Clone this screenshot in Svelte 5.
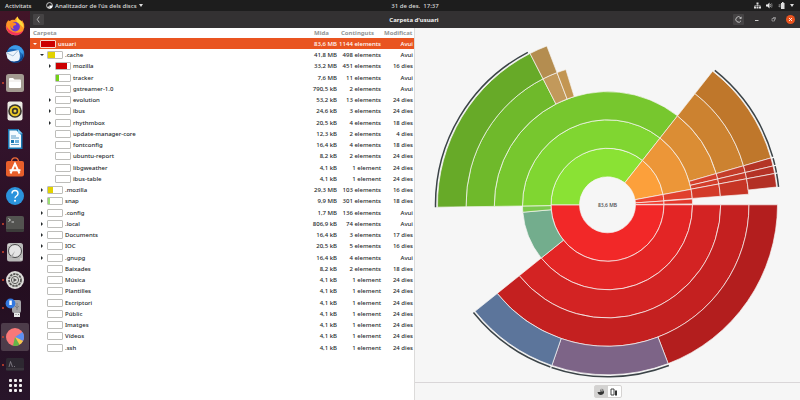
<script>
  // name, depth, size, contents, modified, expander, fill percent, fill colour
  const raw = [
    ['usuari', 0, '83,6 MB', '1144 elements', 'Avui', 'open', 100, '#cc0000'],
    ['.cache', 1, '41,8 MB', '498 elements', 'Avui', 'open', 50, '#e2d200'],
    ['mozilla', 2, '33,2 MB', '451 elements', '16 dies', 'closed', 78, '#cc0000'],
    ['tracker', 2, '7,6 MB', '11 elements', 'Avui', '', 18, '#73d216'],
    ['gstreamer-1.0', 2, '790,5 kB', '2 elements', 'Avui', '', 0, ''],
    ['evolution', 2, '53,2 kB', '13 elements', '24 dies', 'closed', 0, ''],
    ['ibus', 2, '24,6 kB', '3 elements', '24 dies', 'closed', 0, ''],
    ['rhythmbox', 2, '20,5 kB', '4 elements', '18 dies', 'closed', 0, ''],
    ['update-manager-core', 2, '12,3 kB', '2 elements', '4 dies', '', 0, ''],
    ['fontconfig', 2, '16,4 kB', '4 elements', '18 dies', '', 0, ''],
    ['ubuntu-report', 2, '8,2 kB', '2 elements', '24 dies', '', 0, ''],
    ['libgweather', 2, '4,1 kB', '1 element', '24 dies', '', 0, ''],
    ['ibus-table', 2, '4,1 kB', '1 element', '24 dies', '', 0, ''],
    ['.mozilla', 1, '29,3 MB', '103 elements', '16 dies', 'closed', 35, '#e2d200'],
    ['snap', 1, '9,9 MB', '301 elements', '18 dies', 'closed', 14, '#99e070'],
    ['.config', 1, '1,7 MB', '136 elements', 'Avui', 'closed', 0, ''],
    ['.local', 1, '806,9 kB', '74 elements', 'Avui', 'closed', 0, ''],
    ['Documents', 1, '16,4 kB', '3 elements', '17 dies', 'closed', 0, ''],
    ['IOC', 1, '20,5 kB', '5 elements', '16 dies', 'closed', 0, ''],
    ['.gnupg', 1, '16,4 kB', '4 elements', 'Avui', 'closed', 0, ''],
    ['Baixades', 1, '8,2 kB', '2 elements', '18 dies', '', 0, ''],
    ['Música', 1, '4,1 kB', '1 element', '24 dies', '', 0, ''],
    ['Plantilles', 1, '4,1 kB', '1 element', '24 dies', '', 0, ''],
    ['Escriptori', 1, '4,1 kB', '1 element', '24 dies', '', 0, ''],
    ['Públic', 1, '4,1 kB', '1 element', '24 dies', '', 0, ''],
    ['Imatges', 1, '4,1 kB', '1 element', '24 dies', '', 0, ''],
    ['Vídeos', 1, '4,1 kB', '1 element', '24 dies', '', 0, ''],
    ['.ssh', 1, '4,1 kB', '1 element', '24 dies', '', 0, '']
  ];
  const rows = raw.map(([name, depth, size, items, date, toggle, fill, color]) => ({ name, depth, size, items, date, toggle, fill, color }));

  const cx = 192.5;
  const cy = 176.8;
  const radii = [28, 56.5, 85, 113.2, 141.5, 170];

  // ring, start angle, end angle (degrees clockwise from east), colour
  const slices = [
    [1, 0, 180, '#f22828'], [2, 0, 141.2, '#e32525'], [3, 0, 141.2, '#d32323'], [4, 0, 141.2, '#c42020'], [5, 0, 69.1, '#b31e1e'],
    [5, 69.1, 109.1, '#7d6487'], [5, 109.1, 141.2, '#5c759b'],
    [2, 141.2, 175, '#73ad8d'], [2, 175, 179.2, '#7bc94c'],
    [1, 180, 308.2, '#8ae234'], [2, 179.2, 308.2, '#80d631'], [3, 179.2, 308.2, '#77c72e'], [4, 179.2, 242.9, '#6fb92b'], [5, 179.2, 242.9, '#67aa28'],
    [4, 242.9, 249.1, '#c2995b'], [4, 249.1, 252.9, '#c39652'], [5, 242.9, 249.1, '#b48d50'],
    [1, 308.2, 349.5, '#fca03b'], [2, 308.2, 349.5, '#ec9638'], [3, 308.2, 344, '#db8d34'], [4, 308.2, 344, '#cc8230'], [5, 308.2, 344, '#bf772b'],
    [1, 349.5, 356.1, '#ec4430'], [2, 349.5, 355.7, '#e0402d'],
    [3, 344, 346.8, '#d4402c'], [4, 344, 346.8, '#c43c2a'], [5, 344, 346.8, '#b43526'],
    [3, 346.8, 349.4, '#d23d2a'], [4, 346.8, 349.4, '#c43828'], [5, 346.8, 349.4, '#b43226'],
    [3, 349.4, 355.7, '#d33a29'], [4, 349.4, 355.7, '#c63526'], [5, 349.4, 354, '#b33025'],
    [1, 356.1, 359.4, '#f03a2c'], [2, 356.1, 359.4, '#e3372a']
  ];
  const edges = [[69.1, 109], [109.4, 141.2], [179.2, 242.4], [308.6, 343.8], [344.3, 346.6], [347, 349.2], [349.6, 354]];

  function at(r, deg) {
    const a = (deg * Math.PI) / 180;
    return (cx + r * Math.cos(a)).toFixed(2) + ' ' + (cy + r * Math.sin(a)).toFixed(2);
  }
  function slicePath([ring, a, b]) {
    const r0 = radii[ring - 1];
    const r1 = radii[ring];
    return `M${at(r0, a)}L${at(r1, a)}A${r1} ${r1} 0 0 1 ${at(r1, b)}L${at(r0, b)}A${r0} ${r0} 0 0 0 ${at(r0, a)}Z`;
  }
  const edgePath = ([a, b]) => `M${at(172, a)}A172 172 0 0 1 ${at(172, b)}`;

  const dock = [
    { id: 'firefox', label: 'Firefox' },
    { id: 'mail', label: 'Thunderbird' },
    { id: 'files', label: 'Fitxers', running: true },
    { id: 'music', label: 'Rhythmbox' },
    { id: 'writer', label: 'Writer' },
    { id: 'store', label: 'Programari' },
    { id: 'help', label: 'Ajuda' },
    { id: 'terminal', label: 'Terminal', running: true },
    { id: 'disks', label: 'Discs', running: true },
    { id: 'settings', label: 'Paràmetres', running: true },
    { id: 'usb', label: 'Creador de discs', running: true },
    { id: 'usage', label: "Analitzador de l'ús dels discs", running: true, active: true },
    { id: 'monitor', label: 'Monitor', running: true }
  ];
</script>

<div class="desktop">
  <header class="topbar">
    <button class="activities">Activitats</button>
    <button class="appmenu">
      <svg width="7" height="7" viewBox="0 0 14 14"><circle cx="7" cy="7" r="5.8" fill="none" stroke="#ddd" stroke-width="1.8" /><path d="M7 7H13A6 6 0 0 1 7 13Z" fill="#fff" /><path d="M3 11L7 7V13Z" fill="#ddd" /></svg>
      <span>Analitzador de l'ús dels discs</span>
      <i class="caret"></i>
    </button>
    <time>31 de des.&nbsp; 17:37</time>
    <div class="tray">
      <svg width="7" height="7" viewBox="0 0 14 14" fill="#ddd"><path d="M5 1h4v4H5zM0 9h4v4H0zM10 9h4v4h-4zM5 9h4v4H5z" /><path d="M6.4 5h1.2v2.2H13V9h-1.200V8.200H2.200V9H1V7.200h5.400z" /></svg>
      <svg width="7" height="7" viewBox="0 0 14 14"><path d="M0 5h3l4-4v12L3 9H0z" fill="#eee" /><path d="M9 4q2 3 0 6" fill="none" stroke="#ccc" stroke-width="1.500" /><path d="M11 2q3 5 0 10" fill="none" stroke="#777" stroke-width="1.500" /></svg>
      <svg width="7" height="7" viewBox="0 0 14 14"><path d="M6 2h2V0h3v2h2v12H6z" fill="#ddd" /><path d="M1 6h3M1 9h3M4 4v7" stroke="#999" stroke-width="1.500" /></svg>
      <i class="caret"></i>
    </div>
  </header>

  <div class="workspace">
    <nav class="dock">
      <div class="apps">
        {#each dock as app}
          <button class="app" class:active={app.active} aria-label={app.label}>
            {#if app.running}<i class="dot"></i>{/if}
            <svg width="20" height="20" viewBox="0 0 20 20">
              {#if app.id === 'firefox'}
                <path d="M3.200 4.300Q4 5 4.800 5Q7 3.300 9.500 4Q11 1.500 12.500.5Q13 3 15.500 4.500Q17 5.500 17 4Q19.700 7.500 19.300 11.500A9.300 8.700 0 0 1 .8 11Q.5 7 3.200 4.300Z" fill="#ff9526" />
                <path d="M1 9Q1.300 18.500 10 19.500Q16 19.500 18.500 14.500Q14 18 8 16Q3 14 1 9Z" fill="#f3365c" />
                <path d="M12.500.5Q13 3 15.500 4.500Q19 8 18.500 12Q15 8 12 6.500Q10.500 4 12.500.5Z" fill="#ffdb3c" />
                <circle cx="10.200" cy="10.800" r="4.700" fill="#6c3ad0" />
                <path d="M4.500 7.500Q8 5.500 11 7.500Q12 9 9 9.500Q7 11 9 13Q5.500 13 4.500 7.500Z" fill="#ff8a22" />
              {:else if app.id === 'mail'}
                <circle cx="10.500" cy="10" r="8.800" fill="#1b66b5" />
                <path d="M3 6Q7-.5 14 2Q20 6 19 13Q17 9 14 7Q8 3 3 6Z" fill="#3d9be8" />
                <path d="M1 8.500L13.500 6Q16 12 14 16.500Q7 19.500 2.500 14.500Z" fill="#eef4fb" />
                <path d="M1 8.500L8 12L13.500 6" fill="none" stroke="#a9bfd6" stroke-width="1" />
                <path d="M14 16.500Q18 13 18 8Q20 15 14 18Q9 20 5 17Q10 18.500 14 16.500Z" fill="#0d3e86" />
              {:else if app.id === 'files'}
                <rect x="1" y="1" width="18" height="18" rx="2.500" fill="#a39a91" />
                <path d="M4 6Q4 5 5 5H8L9.500 6.500H15Q16 6.500 16 7.500V14Q16 15 15 15H5Q4 15 4 14Z" fill="#fff" />
                <path d="M4 8H16" stroke="#dcd7d1" stroke-width=".7" />
              {:else if app.id === 'music'}
                <rect x="2.500" y=".5" width="15" height="19" rx="2" fill="#eceae4" />
                <circle cx="10" cy="10" r="6.800" fill="#38352d" />
                <circle cx="10" cy="10" r="4.200" fill="none" stroke="#ecc927" stroke-width="2" />
                <circle cx="10" cy="10" r="1.500" fill="#f4d63c" />
              {:else if app.id === 'writer'}
                <path d="M3 0H13L17.500 4.500V20H3Z" fill="#1877b2" />
                <path d="M4.500 1.500H11.500L16 6V18.500H4.500Z" fill="#f5fbff" />
                <path d="M13 0L17.500 4.500H13Z" fill="#83c8ef" />
                <path d="M6 7H11M6 9H14M6 15.500H14" stroke="#5a9bc6" stroke-width="1" />
                <rect x="6" y="11" width="3" height="3" fill="#1877b2" /><rect x="10" y="11" width="4" height="3" fill="#6fb2dc" />
              {:else if app.id === 'store'}
                <path d="M6.500 5Q6.500.8 10 .8T13.500 5" fill="none" stroke="#ee6b38" stroke-width="1.300" />
                <rect x="1" y="4" width="18" height="15.500" rx="2" fill="#e95f2b" />
                <path d="M5.500 16.500L10 6.500L14.500 16.500M4.500 13.200H15.500" fill="none" stroke="#fff" stroke-width="1.900" />
              {:else if app.id === 'help'}
                <circle cx="10" cy="10" r="9" fill="#2b93dc" />
                <path d="M7 7.500Q7 4.500 10 4.500T13 7.500Q13 9 11.500 10T10 12.300" fill="none" stroke="#fff" stroke-width="1.400" />
                <circle cx="10" cy="14.700" r="1" fill="#fff" />
              {:else if app.id === 'terminal'}
                <rect x="1" y="2" width="18" height="16" rx="2" fill="#535350" />
                <path d="M1 15H19V16Q19 18 17 18H3Q1 18 1 16Z" fill="#3c3c3a" />
                <path d="M3.500 4.500L5.500 6L3.500 7.500M6.500 8H9" fill="none" stroke="#eee" stroke-width=".8" />
              {:else if app.id === 'disks'}
                <rect x="2" y="1" width="16" height="18.500" rx="2.500" fill="#b9b9b8" />
                <circle cx="10" cy="9" r="6.500" fill="#e4e4e4" stroke="#494949" stroke-width="1" />
                <path d="M10 9L5 15L4 16L7 16Z" fill="#aaa" />
                <circle cx="4" cy="3" r=".7" fill="#fff" /><circle cx="16" cy="17" r=".7" fill="#fff" />
              {:else if app.id === 'settings'}
                <circle cx="10" cy="10" r="9" fill="#deddda" />
                <circle cx="10" cy="10" r="6" fill="none" stroke="#5a5a57" stroke-width="1.800" stroke-dasharray="2.400 .8" />
                <circle cx="10" cy="10" r="3.600" fill="none" stroke="#5a5a57" stroke-width="1" />
                <path d="M8.500 8L12 10L8.500 12Z" fill="#555" />
              {:else if app.id === 'usb'}
                <rect x="7" y="2" width="9" height="13" rx="2" fill="#a6a5a8" />
                <path d="M9 15H15V19H9Z" fill="#e8e8e8" /><path d="M10.500 16.500H11.500M13 16.500H14" stroke="#777" stroke-width="1" />
                <path d="M12 5V12M10 8L12 10L14 8" fill="none" stroke="#7d7c80" stroke-width="1" />
                <circle cx="5.500" cy="5.500" r="4.900" fill="#3278e0" />
                <rect x="4.300" y="2.500" width="2.500" height="4.500" fill="#fff" />
              {:else if app.id === 'usage'}
                <circle cx="10" cy="10" r="9" fill="#f97878" />
                <path d="M10 10L17.500 5A9 9 0 0 1 18 14Z" fill="#5c8ff2" />
                <path d="M10 10L18 14A9 9 0 0 1 14.500 17.800Z" fill="#f4cb4e" />
                <path d="M10 10L14.500 17.800A9 9 0 0 1 8 18.800Z" fill="#64b548" />
              {:else}
                <rect x="1" y="3" width="18" height="13" rx="1.500" fill="#2d2831" />
                <path d="M1 13H19V15H1Z" fill="#3a353d" />
                <path d="M4 12L5.500 6.500L7.500 12M9 11.500H10" fill="none" stroke="#8b8690" stroke-width=".8" />
              {/if}
            </svg>
          </button>
        {/each}
      </div>
      <button class="grid" aria-label="Mostra les aplicacions">
        {#each Array(9) as _}<i></i>{/each}
      </button>
    </nav>

    <main class="window">
      <div class="titlebar">
        <button class="tool" aria-label="Enrere"><svg width="7" height="7" viewBox="0 0 14 14"><path d="M8.500 1L4.500 7L8.500 13" fill="none" stroke="#ccc" stroke-width="1.600" /></svg></button>
        <h1>Carpeta d'usuari</h1>
        <div class="controls">
          <button class="tool" aria-label="Actualitza"><svg width="7" height="7" viewBox="0 0 14 14"><path d="M12 9.500A5.500 5.500 0 1 1 11 3" fill="none" stroke="#ddd" stroke-width="1.600" /><path d="M13 1V5.500H8.500Z" fill="#ddd" /></svg></button>
          <button class="wm" aria-label="Minimitza"><svg width="9" height="9" viewBox="0 0 9 9"><path d="M3 5.500H6.500" stroke="#ccc" stroke-width="1" /></svg></button>
          <button class="wm" aria-label="Restaura"><svg width="9" height="9" viewBox="0 0 9 9"><path d="M3 3.500H5.500V6H3ZM4 2.500H6.500V4.500" fill="none" stroke="#aaa" stroke-width=".7" /></svg></button>
          <button class="wm close" aria-label="Tanca"><svg width="9" height="9" viewBox="0 0 9 9"><path d="M3 3L6 6M6 3L3 6" stroke="#fff" stroke-width=".9" /></svg></button>
        </div>
      </div>

      <div class="panes">
        <section class="list">
          <table>
            <thead>
              <tr><th class="name">Carpeta</th><th class="size">Mida</th><th class="items">Continguts</th><th class="date">Modificat</th></tr>
            </thead>
            <tbody>
              {#each rows as row}
                <tr class:selected={row.depth === 0}>
                  <td>
                    <div class="folder depth{row.depth}">
                      {#if row.toggle}
                        <button class="expander {row.toggle}" aria-label={row.name}></button>
                      {:else}
                        <span class="expander"></span>
                      {/if}
                      <span class="level"><i style="width: {row.fill}%; background: {row.color}"></i></span>
                      <span>{row.name}</span>
                    </div>
                  </td>
                  <td class="num">{row.size}</td>
                  <td class="num">{row.items}</td>
                  <td class="num">{row.date}</td>
                </tr>
              {/each}
            </tbody>
          </table>
        </section>

        <section class="chart">
          <div class="canvas">
            <svg viewBox="0 0 385 354">
              {#each slices as s}
                <path d={slicePath(s)} fill={s[3]} stroke="#f6f5f4" stroke-width=".7" />
              {/each}
              {#each edges as e}
                <path d={edgePath(e)} fill="none" stroke="#3c4448" stroke-width="1.500" />
              {/each}
              <text x={cx} y="179" text-anchor="middle">83,6 MB</text>
            </svg>
          </div>
          <footer>
            <div class="switch">
              <button class="on" aria-label="Diagrama d'anells"><svg width="8" height="8" viewBox="0 0 16 16"><path d="M1 8H7V2Q9 5 9 7L14 6Q15 13 8 14Q2 14 1 8Z" fill="#333" /><path d="M9 1A6 6 0 0 1 14 6L9 7Z" fill="#888" /></svg></button>
              <button aria-label="Diagrama d'arbre"><svg width="8" height="8" viewBox="0 0 16 16"><path d="M2 2H8V14H2Z" fill="none" stroke="#333" stroke-width="1.800" /><path d="M10 5H14V15H10Z" fill="#333" /></svg></button>
            </div>
          </footer>
        </section>
      </div>
    </main>
  </div>
</div>

<style>
  :global(body) { margin: 0; }
  .desktop {
    display: flex;
    flex-direction: column;
    height: 100vh;
    font: 500 6px/8px "Noto Sans", "Open Sans", sans-serif;
    color: #24292b;
    overflow: hidden;
  }
  button {
    padding: 0;
    border: 0;
    background: none;
    font: inherit;
    color: inherit;
  }
  svg { display: block; }
  .topbar {
    display: grid;
    grid-template-columns: 30px 1fr auto 1fr;
    align-items: center;
    height: 11px;
    flex: none;
    background: #1d1d1d;
    color: #dedede;
    white-space: nowrap;
  }
  .activities { padding-left: 5px; justify-self: start; }
  .appmenu {
    display: flex;
    align-items: center;
    gap: 2px;
    padding-left: 16px;
  }
  .caret {
    border: 2px solid transparent;
    border-top: 3px solid #ddd;
    border-bottom: 0;
  }
  .tray {
    display: flex;
    align-items: center;
    justify-content: flex-end;
    gap: 5px;
    padding-right: 6px;
  }
  .workspace { display: flex; flex: 1; min-height: 0; }
  .dock {
    display: flex;
    flex-direction: column;
    width: 30px;
    flex: none;
    box-sizing: border-box;
    padding: 1px 1px 8px;
    background: linear-gradient(#421528, #32132b 35%, #240e20 70%, #28152a);
  }
  .apps { display: flex; flex-direction: column; flex: 1; }
  .app {
    position: relative;
    display: flex;
    align-items: center;
    justify-content: center;
    flex: 1;
    border-radius: 2px;
  }
  .app.active { background: #4d3c4a; }
  .dot {
    position: absolute;
    left: 1px;
    width: 2px;
    height: 2px;
    border-radius: 50%;
    background: #d2452c;
  }
  .grid {
    display: grid;
    grid-template-columns: repeat(3, 3px);
    gap: 2px;
    justify-content: center;
  }
  .grid i { height: 3px; background: #f2eff1; border-radius: 1px; }
  .window { display: flex; flex-direction: column; flex: 1; min-width: 0; }
  .titlebar {
    display: grid;
    grid-template-columns: 1fr auto 1fr;
    align-items: center;
    height: 17px;
    flex: none;
    padding: 0 5px 0 3px;
    background: #333132;
    color: #f0f0f0;
  }
  h1 { margin: 0; font-size: 6px; font-weight: 700; }
  .tool {
    display: flex;
    align-items: center;
    justify-content: center;
    width: 11px;
    height: 11px;
    border-radius: 1px;
    background: #454344;
  }
  .controls {
    display: flex;
    align-items: center;
    justify-content: flex-end;
    gap: 8px;
  }
  .wm { border-radius: 50%; }
  .close { background: #e95420; }
  .panes { display: flex; flex: 1; min-height: 0; }
  .list {
    width: 384px;
    flex: none;
    background: #fff;
    border-right: 1px solid #dcdbda;
  }
  table { width: 100%; border-collapse: collapse; table-layout: fixed; }
  th, td { padding: 0; white-space: nowrap; }
  th { height: 10px; text-align: left; color: #929595; font-weight: 700; padding-left: 3px; }
  .size { width: 24px; padding-left: 6px; }
  .items { width: 41px; }
  .date { width: 30px; padding-left: 2px; }
  tbody tr { height: 11px; }
  tbody tr:nth-child(4n + 3) { height: 12px; }
  .num { text-align: right; padding-right: 1px; }
  .selected { background: #e95420; color: #fff; }
  .folder { display: flex; align-items: center; }
  .depth0 { padding-left: 2px; }
  .depth1 { padding-left: 9px; }
  .depth2 { padding-left: 17px; }
  .expander {
    display: flex;
    align-items: center;
    justify-content: center;
    width: 5px;
    height: 5px;
    margin-right: 3px;
  }
  .open::before {
    content: "";
    border: 2px solid transparent;
    border-top: 2px solid currentColor;
    border-bottom: 0;
  }
  .closed::before {
    content: "";
    border: 2px solid transparent;
    border-left: 2px solid currentColor;
    border-right: 0;
  }
  .level {
    display: flex;
    box-sizing: border-box;
    width: 16px;
    height: 8px;
    margin-right: 2px;
    border: 1px solid #bdbdba;
    border-radius: 1px;
    background: #fff;
  }
  .selected .level { border-color: #f7d8cb; }
  .chart {
    display: flex;
    flex-direction: column;
    flex: 1;
    min-width: 0;
    background: #f6f6f6;
  }
  .canvas { flex: 1; min-height: 0; }
  .canvas svg { width: 100%; height: 100%; }
  text { font-size: 5px; fill: #3c4043; }
  footer {
    display: flex;
    align-items: center;
    justify-content: center;
    height: 17px;
    flex: none;
    border-top: 1px solid #d9d6d8;
  }
  .switch {
    display: flex;
    border: 1px solid #d5d3d2;
    border-radius: 2px;
    background: #fff;
  }
  .switch button {
    display: flex;
    align-items: center;
    justify-content: center;
    width: 13px;
    height: 11px;
  }
  .switch .on { background: #d3d2d1; }
</style>
